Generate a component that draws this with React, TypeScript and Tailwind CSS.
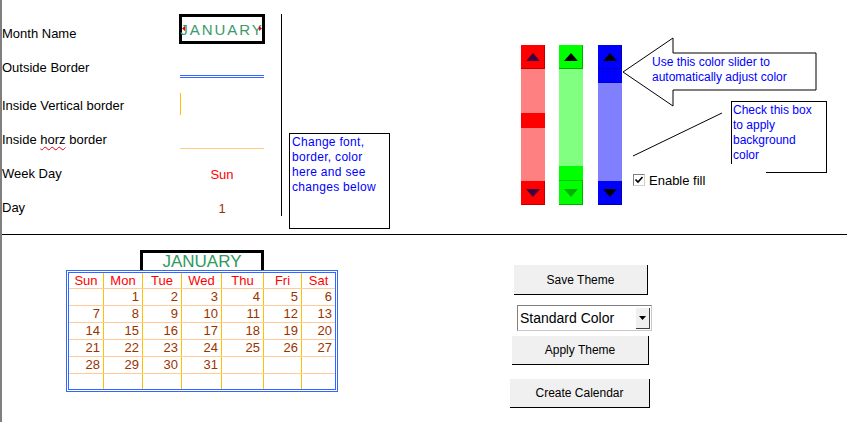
const week = [
  ["", "1", "2", "3", "4", "5", "6"],
  ["7", "8", "9", "10", "11", "12", "13"],
  ["14", "15", "16", "17", "18", "19", "20"],
  ["21", "22", "23", "24", "25", "26", "27"],
  ["28", "29", "30", "31", "", "", ""],
];
const dayNames = ["Sun", "Mon", "Tue", "Wed", "Thu", "Fri", "Sat"];

const Tri = ({ up, color }: { up?: boolean; color: string }) => (
  <svg width="14" height="8" viewBox="0 0 14 8">
    <polygon points={up ? "0,8 7,0 14,8" : "0,0 7,8 14,0"} fill={color} />
  </svg>
);

type SliderProps = {
  btn: string;
  track: string;
  thumb: string;
  upArrow: string;
  downArrow: string;
  before: string;
  after: string;
  className?: string;
};

const Slider = ({ btn, track, thumb, upArrow, downArrow, before, after, className = "" }: SliderProps) => (
  <div className={`flex h-[160px] w-[24px] flex-col ${className}`}>
    <div className={`flex h-[24px] items-center justify-center ${btn}`}>
      <Tri up color={upArrow} />
    </div>
    <div className={`flex flex-1 flex-col ${track}`}>
      <div className={before} />
      <div className={thumb} />
      <div className={after} />
    </div>
    <div className={`flex h-[24px] items-center justify-center ${btn}`}>
      <Tri color={downArrow} />
    </div>
  </div>
);

const Btn = ({ label, className }: { label: string; className: string }) => (
  <div
    className={`flex items-center justify-center border-r border-b border-black bg-[#f0f0f0] text-[12px] text-black ${className}`}
  >
    {label}
  </div>
);

export default function App() {
  return (
    <div className="h-[422px] w-[847px] overflow-hidden border-l-2 border-[#7f7f7f] bg-white font-['Liberation_Sans',Arial,sans-serif] text-black">
      {/* top: settings */}
      <div className="flex h-[235px] border-b border-black">
        <div className="flex w-[177px] flex-col pt-[26px] text-[13px] leading-[15px]">
          <span>Month Name</span>
          <span className="mt-[19px]">Outside Border</span>
          <span className="mt-[23px]">Inside Vertical border</span>
          <span className="mt-[19px]">
            Inside{" "}
            <span className="underline decoration-red-600 decoration-wavy decoration-1 underline-offset-2">horz</span>{" "}
            border
          </span>
          <span className="mt-[19px]">Week Day</span>
          <span className="mt-[19px]">Day</span>
        </div>

        <div className="flex w-[86px] flex-col">
          <div className="relative mt-[14px] flex h-[30px] w-[86px] items-center justify-center border-[3px] border-black text-[15px] leading-none tracking-[2px] text-[#3a9a6a]">
            JANUARY
            <svg className="absolute top-[9px] left-0" width="3" height="5" viewBox="0 0 3 5">
              <polygon points="3,0 0,2.5 3,5" fill="#e00000" />
            </svg>
            <svg className="absolute top-[9px] right-0" width="3" height="5" viewBox="0 0 3 5">
              <polygon points="0,0 3,2.5 0,5" fill="#e00000" />
            </svg>
          </div>
          <div className="mt-[31px] ml-px h-[3px] w-[84px] border-y border-[#3366ff]" />
          <div className="mt-[15px] ml-px h-[22px] w-px bg-[#ffc000]" />
          <div className="mt-[33px] ml-px h-px w-[84px] bg-[#ffcc88]" />
          <span className="mt-[18px] text-center text-[13px] leading-[15px] text-[#ff0000]">Sun</span>
          <span className="mt-[19px] text-center text-[13px] leading-[15px] text-[#993300]">1</span>
        </div>

        <div className="mt-[14px] ml-[16px] h-[202px] w-px bg-black" />

        <div className="mt-[133px] ml-[7px] h-[96px] w-[101px] border border-black px-[2px] pt-px text-[12px] leading-[15px] tracking-[0.3px] text-[#0000ff]">
          Change font,
          <br />
          border, color
          <br />
          here and see
          <br />
          changes below
        </div>

        <div className="mt-[45px] ml-[131px] flex">
          <Slider
            btn="bg-[#ff0000] border-b border-r border-[#c00000]"
            track="bg-[#ff8080]"
            thumb="h-[15px] bg-[#ff0000]"
            upArrow="#400040"
            downArrow="#400040"
            before="h-[44px]"
            after="h-[53px]"
          />
          <Slider
            className="ml-[14px]"
            btn="bg-[#00ff00] border-b border-r border-[#00b000]"
            track="bg-[#80ff80]"
            thumb="h-[15px] bg-[#00ff00] border-b border-[#00c000]"
            upArrow="#000000"
            downArrow="#00b000"
            before="h-[97px]"
            after="h-0"
          />
          <Slider
            className="ml-[15px]"
            btn="bg-[#0000ff] border-b border-r border-[#0000b0]"
            track="bg-[#8080ff]"
            thumb="h-[14px] bg-[#0000ff] border-b border-[#0000c0]"
            upArrow="#000000"
            downArrow="#000000"
            before="h-0"
            after="h-[98px]"
          />
        </div>

        <div className="flex flex-col">
          <div className="relative mt-[37px] h-[70px] w-[195px]">
            <svg className="absolute inset-0" width="195" height="70" viewBox="0 0 195 70">
              <polygon
                points="1,35 51,1 51,16 194,16 194,53 51,53 51,69"
                fill="white"
                stroke="black"
                strokeWidth="1"
              />
            </svg>
            <div className="relative pt-[18px] pl-[30px] text-[12px] leading-[15px] text-[#0000ff]">
              Use this color slider to
              <br />
              automatically adjust color
            </div>
          </div>

          <div className="-mt-[6px] flex">
            <svg width="109" height="72" viewBox="0 0 109 72">
              <line x1="11" y1="55" x2="100" y2="12" stroke="black" strokeWidth="1" />
            </svg>
            <div className="relative h-[72px] w-[96px] border-t border-r border-black pt-px pl-[2px] text-[12px] leading-[15px] text-[#0000ff]">
              <div className="absolute top-0 left-0 h-[62px] w-px bg-black" />
              Check this box
              <br />
              to apply
              <br />
              background
              <br />
              color
              <div className="absolute right-0 bottom-0 h-px w-[60px] bg-black" />
            </div>
          </div>

          <div className="flex h-[14px] items-center pl-[11px]">
            <div className="flex h-[12px] w-[12px] items-center justify-center border border-t-[#808080] border-l-[#808080] border-r-[#d4d0c8] border-b-[#d4d0c8] bg-white">
              <svg width="8" height="8" viewBox="0 0 8 8">
                <polyline points="0.5,3.5 3,6 7.5,1" fill="none" stroke="black" strokeWidth="1.6" />
              </svg>
            </div>
            <span className="ml-[4px] text-[13px] leading-[15px]">Enable fill</span>
          </div>
        </div>
      </div>

      {/* bottom: preview + actions */}
      <div className="flex">
        <div className="mt-[15px] ml-[64px] flex flex-col">
          <div className="ml-[74px] flex h-[20px] w-[124px] items-center justify-center border-[3px] border-b-0 border-black text-[17px] leading-none text-[#2e9960]">
            JANUARY
          </div>
          <div className="w-[272px] border-[3px] border-double border-[#3366ff]">
            <div className="grid h-[16px] grid-cols-[34px_39px_39px_40px_42px_38px_34px] border-b border-[#ffcc99]">
              {dayNames.map((d, i) => (
                <div
                  key={d}
                  className={`text-center text-[13px] leading-[15px] text-[#ff0000] ${i > 0 ? "border-l border-[#ffc000]" : ""}`}
                >
                  {d}
                </div>
              ))}
            </div>
            {week.map((row, r) => (
              <div
                key={r}
                className="grid h-[17px] grid-cols-[34px_39px_39px_40px_42px_38px_34px] border-b border-[#ffcc99]"
              >
                {row.map((n, i) => (
                  <div
                    key={i}
                    className={`pr-[3px] text-right text-[13px] leading-[16px] text-[#993300] ${i > 0 ? "border-l border-[#ffc000]" : ""}`}
                  >
                    {n}
                  </div>
                ))}
              </div>
            ))}
            <div className="grid h-[15px] grid-cols-[34px_39px_39px_40px_42px_38px_34px]">
              {dayNames.map((d, i) => (
                <div key={d} className={i > 0 ? "border-l border-[#ffc000]" : ""} />
              ))}
            </div>
          </div>
        </div>

        <div className="ml-[172px] flex flex-col">
          <Btn label="Save Theme" className="mt-[30px] ml-[4px] h-[30px] w-[134px]" />
          <div className="mt-[10px] ml-[7px] flex h-[26px] w-[135px] items-center border border-[#808080] border-r-[#c8c8c8] border-b-[#c8c8c8] bg-white pl-[2px]">
            <span className="flex-1 text-[14px] leading-none">Standard Color</span>
            <span className="mr-px flex h-[21px] w-[14px] items-center justify-center border-r border-b border-[#404040] bg-[#f0f0f0]">
              <svg width="7" height="4" viewBox="0 0 7 4">
                <polygon points="0,0 7,0 3.5,4" fill="black" />
              </svg>
            </span>
          </div>
          <Btn label="Apply Theme" className="mt-[5px] ml-[2px] h-[29px] w-[137px]" />
          <Btn label="Create Calendar" className="mt-[14px] h-[29px] w-[140px]" />
        </div>
      </div>
    </div>
  );
}
